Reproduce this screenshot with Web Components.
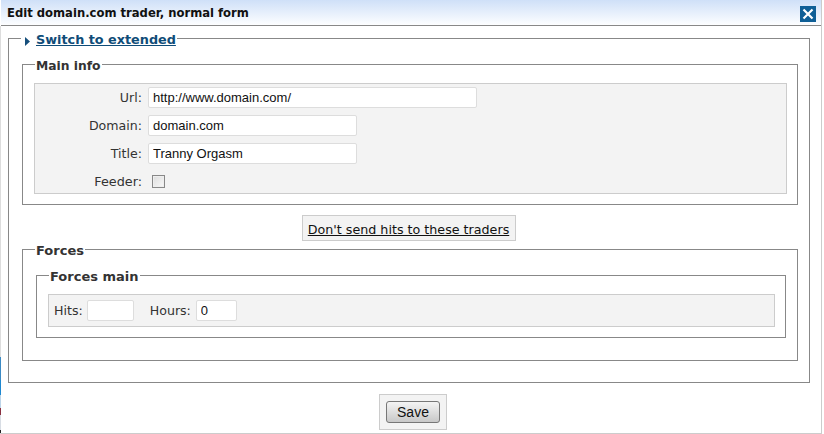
<!DOCTYPE html>
<html><head><meta charset="utf-8"><style>
html,body{margin:0;padding:0;background:#fff}
body{width:824px;height:434px;overflow:hidden;font:12.6px "DejaVu Sans",Verdana,sans-serif;color:#333}
</style></head><body>
<edit-dialog>
<span slot="title">Edit domain.com trader, normal form</span>
<form-group>
  <switch-link slot="legend">Switch to extended</switch-link>
  <form-group style="margin:12px 11px 0 13px;--pad-b:10px">
    <span slot="legend" style="font-size:12.3px">Main info</span>
    <form-panel style="margin-top:12px">
      <form-row label="Url:"><text-box value="http://www.domain.com/" style="width:329px"></text-box></form-row>
      <form-row label="Domain:"><text-box value="domain.com" style="width:209px"></text-box></form-row>
      <form-row label="Title:"><text-box value="Tranny Orgasm" style="width:209px"></text-box></form-row>
      <form-row label="Feeder:" style="font-size:12.8px"><check-box></check-box></form-row>
    </form-panel>
  </form-group>
  <center-row style="margin-top:10px"><link-button>Don't send hits to these traders</link-button></center-row>
  <form-group style="margin:1px 11px 21px 13px;--pad-b:22px">
    <span slot="legend" style="font-size:13px">Forces</span>
    <form-group style="margin:12px 11px 0 13px;--pad-b:10px">
      <span slot="legend" style="font-size:13px">Forces main</span>
      <forces-row style="margin:12px 10px 0 11px">
        <form-row label="Hits:" inline style="--lm:4px"><text-box style="width:47px"></text-box></form-row>
        <form-row label="Hours:" inline><text-box value="0" style="width:41px"></text-box></form-row>
      </forces-row>
    </form-group>
  </form-group>
</form-group>
<save-bar slot="footer">Save</save-bar>
</edit-dialog>
<script>
function def(name,css,html,extra){
  customElements.define(name,class extends HTMLElement{
    constructor(){super();this.attachShadow({mode:'open'}).innerHTML='<style>'+css+'</style>'+html;}
    connectedCallback(){if(extra)extra.call(this,this.shadowRoot);}
  });
}
def('edit-dialog',
`:host{display:flex;flex-direction:column;box-sizing:border-box;width:822px;height:434px;background:#fff;
  border-right:1px solid #ccc;border-bottom:1px solid #ccc;position:relative;padding-left:1px}
 :host::before{content:"";position:absolute;left:0;top:26px;bottom:0;width:1px;
  background:linear-gradient(#ddd 0 331px,#3b8ac4 331px 354px,#1e88d0 354px 369px,#bcd4e8 369px 382px,#8a3040 382px 389px,#d8dde4 389px 404px,#222 404px)}
 header{flex:none;display:flex;justify-content:space-between;align-items:center;box-sizing:border-box;height:26px;padding:0 5px 0 6px;
  background:linear-gradient(#cfe0f8,#fdfeff);border-bottom:1px solid #888;font-weight:bold;font-size:11.6px;color:#111}
 svg{display:block;margin-top:3px}
 main{flex:none;padding:5px 11px 0 7px;display:block}
 footer{flex:none;display:flex;justify-content:center;margin-top:11px;padding-left:4px}`,
`<header><span><slot name="title"></slot></span><svg width="16" height="16" viewBox="0 0 16 16"><rect width="16" height="16" fill="#0f5f96"/><path d="M3.5 3.5 L12.5 12.5 M12.5 3.5 L3.5 12.5" stroke="#fff" stroke-width="2.2"/></svg></header>
<main><slot></slot></main><footer><slot name="footer"></slot></footer>`);
def('form-group',
`:host{display:block;font:bold 12.6px "DejaVu Sans",Verdana,sans-serif;color:#333}
 fieldset{margin:0;padding:0 0 var(--pad-b,0);border:1px solid #888;min-width:0}
 legend{margin-left:12px;padding:0 1px;line-height:18px;height:14px}`,
`<fieldset><legend><slot name="legend"></slot></legend><slot></slot></fieldset>`);
def('switch-link',
`:host{display:inline-flex;align-items:center;gap:6px;padding-left:3px}
 a{color:#0f4c78;text-decoration:underline;font-weight:bold;font-size:12.8px}
 svg{display:block;margin-top:3px}`,
`<svg width="5" height="9" viewBox="0 0 5 9"><path d="M0 0L5 4.5L0 9Z" fill="#164f7c"/></svg><a href="#"><slot></slot></a>`);
def('form-panel',
`:host{display:grid;gap:7px;background:#f3f3f3;border:1px solid #ccc;margin:0 10px 0 11px;padding:3px 0 1px;font-weight:normal}`,
`<slot></slot>`);
def('form-row',
`:host{display:flex;align-items:center;min-height:21px;font:normal 12.6px "DejaVu Sans",Verdana,sans-serif;color:#333}
 label{width:107px;text-align:right;margin-right:6px;white-space:nowrap}
 :host([inline]) label{width:auto;margin-right:var(--lm,5px)}`,
`<label></label><slot></slot>`,
function(r){r.querySelector('label').textContent=this.getAttribute('label');});
def('text-box',
`:host{display:block;box-sizing:border-box}
 input{display:block;box-sizing:border-box;width:100%;height:21px;margin:0;padding:0 4px;border:1px solid #ddd;border-radius:2px;background:#fff;
  font:13px "Liberation Sans",Arial,sans-serif;color:#111;outline:0}`,
`<input type="text">`,
function(r){r.querySelector('input').setAttribute('value',this.getAttribute('value')||'');});
def('check-box',
`:host{display:block;width:13px;height:13px;box-sizing:border-box;margin-left:4px;border:1px solid #888;background:linear-gradient(135deg,#ddd,#f8f8f8);box-shadow:inset 0 0 0 1px #eee}`,
`<input type="checkbox" aria-label="Feeder" style="opacity:0;margin:0;width:11px;height:11px;display:block">`);
def('center-row',`:host{display:flex;justify-content:center;margin-left:-1px}`,`<slot></slot>`);
def('link-button',
`:host{display:block;box-sizing:border-box;height:26px;width:214px;background:#f3f3f3;border:1px solid #ccc;text-align:center;padding-top:2px;font:normal 12.7px/24px "DejaVu Sans",Verdana,sans-serif}
 a{color:#111;text-decoration:underline}`,
`<a href="#"><slot></slot></a>`);
def('forces-row',
`:host{display:flex;gap:16px;box-sizing:border-box;height:33px;align-items:center;background:#f3f3f3;border:1px solid #ccc;padding-left:5px}`,
`<slot></slot>`);
def('save-bar',
`:host{display:flex;align-items:center;justify-content:center;box-sizing:border-box;width:68px;height:36px;background:#f3f3f3;border:1px solid #ccc}
 button{box-sizing:border-box;width:54px;height:22px;padding:0;border:1px solid #777;border-radius:3px;background:linear-gradient(#f4f4f4,#c8c8c8);
  font:14px "Liberation Sans",Arial,sans-serif;color:#111}`,
`<button><slot></slot></button>`);
</script>
</body></html>
